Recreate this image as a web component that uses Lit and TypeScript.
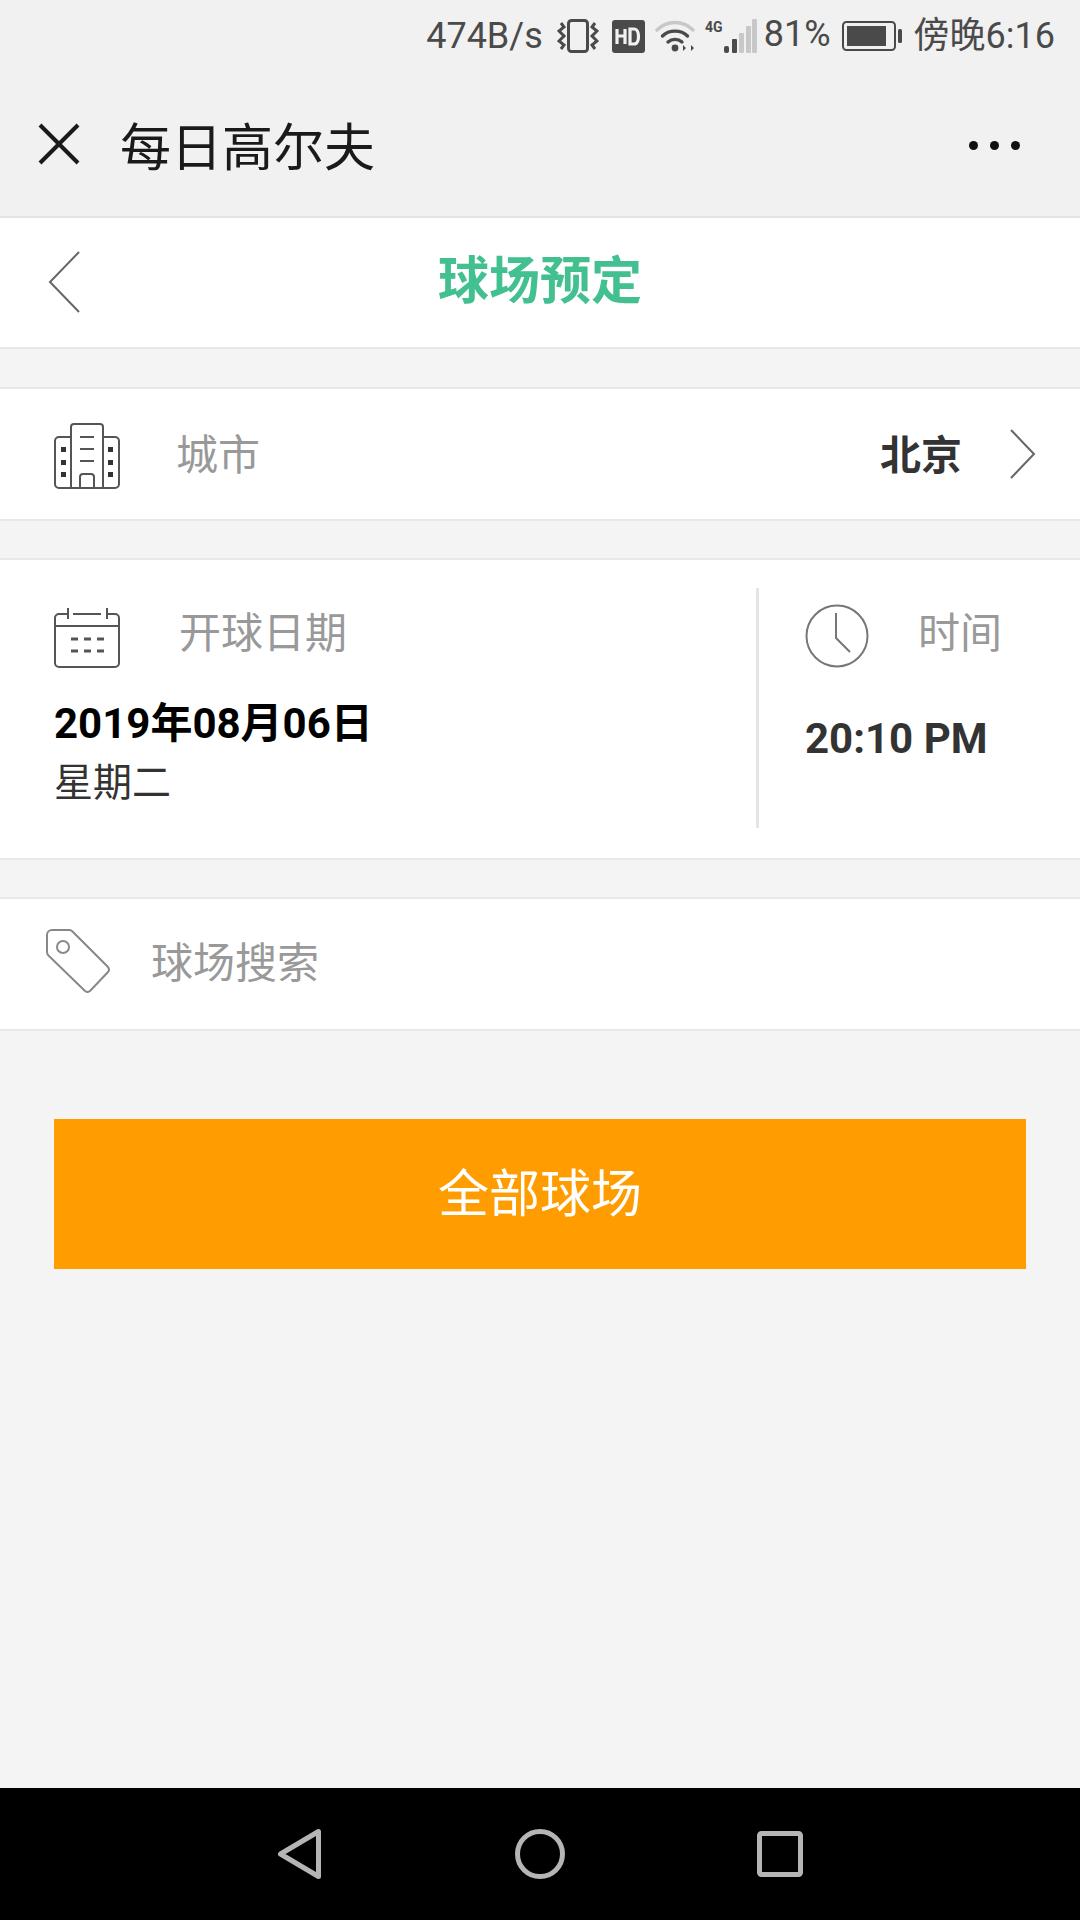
import { LitElement, html, css, svg } from "lit";
import { customElement } from "lit/decorators.js";

const closeIcon = svg`<line x1="2" y1="2" x2="40" y2="40"/><line x1="40" y1="2" x2="2" y2="40"/>`;

@customElement("app-root")
export class AppRoot extends LitElement {
  static styles = css`
    :host {
      display: flex;
      flex-direction: column;
      height: 1920px;
      width: 1080px;
      background: #f4f4f4;
      font-family: Roboto, "Noto Sans CJK SC", sans-serif;
      overflow: hidden;
    }
    svg { display: block; flex: none; }

    .status {
      height: 72px;
      background: #f1f1f1;
      display: flex;
      align-items: center;
      justify-content: flex-end;
      padding-right: 25px;
      color: #4a4a4a;
      font-size: 36px;
      line-height: 72px;
      white-space: nowrap;
    }
    .speed { margin-right: 14px; }
    .vib { margin-right: 13px; }
    .hd { margin-right: 10px; }
    .wifi { margin-right: 10px; }
    .signal { margin-right: 7px; }
    .percent { margin-right: 11px; margin-bottom: 4px; }
    .battery { margin-right: 12px; }

    .wx {
      height: 144px;
      background: #f1f1f1;
      border-bottom: 2px solid #e4e4e4;
      display: flex;
      align-items: center;
      padding: 0 60px 0 38px;
    }
    .wx-close { stroke: #1a1a1a; stroke-width: 4; margin-right: 40px; }
    .wx-title { font-size: 51px; color: #1a1a1a; flex: 1; font-family: "Noto Sans CJK SC", sans-serif; }
    .dots { display: flex; gap: 12px; margin-top: 2px; }
    .dots i { width: 9px; height: 9px; border-radius: 50%; background: #111; }

    .page-head {
      height: 129px;
      background: #fff;
      border-bottom: 2px solid #e6e6e6;
      position: relative;
      display: flex;
      align-items: center;
      justify-content: center;
    }
    .page-head svg { position: absolute; left: 48px; top: 33px; }
    .page-title {
      font-size: 51px;
      font-weight: 700;
      color: #42c08f;
      margin-bottom: 12px;
      font-family: "Noto Sans CJK SC", sans-serif;
    }

    .row {
      background: #fff;
      border-top: 2px solid #e8e8e8;
      border-bottom: 2px solid #e8e8e8;
      margin-top: 37px;
      display: flex;
      align-items: center;
    }
    .label {
      font-size: 42px;
      line-height: 40px;
      color: #999;
      font-family: "Noto Sans CJK SC", sans-serif;
    }

    .city { height: 130px; padding: 0 44px 0 54px; margin-top: 38px; }
    .city-icon { margin-top: 4px; }
    .city .label { margin-left: 56px; margin-bottom: 4px; flex: 1; }
    .city-value {
      font-size: 41px;
      line-height: 40px;
      font-weight: 700;
      color: #333;
      margin-right: 48px;
      margin-bottom: 4px;
      font-family: "Noto Sans CJK SC", sans-serif;
    }

    .when { height: 298px; align-items: flex-start; }
    .when-date { width: 702px; padding: 48px 0 0 54px; }
    .when-head { display: flex; align-items: center; }
    .when-date .label { margin-left: 59px; margin-bottom: 17px; }
    .date { font-size: 42px; font-weight: 700; color: #000; margin-top: 30px; line-height: 52px; }
    .weekday { font-size: 39px; color: #333; line-height: 50px; margin-top: 4px; font-family: "Noto Sans CJK SC", sans-serif; }
    .divider { width: 3px; height: 240px; margin-top: 28px; background: #e5e5e5; }
    .when-time { padding: 44px 0 0 46px; }
    .when-time .label { margin-left: 49px; margin-bottom: 13px; }
    .time { font-size: 42px; font-weight: 700; color: #333; margin-top: 45px; line-height: 52px; }

    .search { height: 130px; padding-left: 46px; }
    .search-icon { margin-bottom: 6px; }
    .search .label { margin-left: 41px; margin-bottom: 9px; }

    .all {
      margin: 88px 54px 0;
      height: 150px;
      background: #ff9c00;
      color: #fff;
      display: flex;
      align-items: center;
      justify-content: center;
    }
    .all span {
      font-size: 51px;
      margin-bottom: 8px;
      font-family: "Noto Sans CJK SC", sans-serif;
    }
    .spacer { flex: 1; }
    .nav {
      height: 132px;
      background: #000;
      display: flex;
      align-items: center;
      padding-left: 276px;
    }
    .nav svg { fill: none; stroke: #b5b5b5; stroke-width: 5; stroke-linejoin: round; }
    .nav .home { margin-left: 193px; }
    .nav .recent { margin-left: 192px; }
  `;

  render() {
    return html`
      <div class="status">
        <span class="speed">474B/s</span>
        <svg class="vib" width="42" height="34" viewBox="0 0 42 34" fill="none" stroke="#4a4a4a">
          <rect x="11.5" y="1.5" width="19" height="31" rx="3" stroke-width="3"/>
          <path d="M4 4 L7 8 L2 12 L7 17 L2 22 L7 26 L4 30 M38 4 L35 8 L40 12 L35 17 L40 22 L35 26 L38 30" stroke-width="3"/>
        </svg>
        <svg class="hd" width="33" height="33" viewBox="0 0 33 33">
          <rect width="33" height="33" rx="3" fill="#4a4a4a"/>
          <path d="M5 9v15M5 16h8M13 9v15M18 9v15h4c6 0 6-15 0-15z" fill="none" stroke="#f1f1f1" stroke-width="3.2"/>
        </svg>
        <svg class="wifi" width="40" height="34" viewBox="0 0 40 34" fill="none" stroke-linecap="round">
          <path d="M2 11 C12 1 28 1 38 11" stroke="#c8c8c8" stroke-width="3.4"/>
          <path d="M7.5 17 C14 10.5 26 10.5 32.5 17" stroke="#4a4a4a" stroke-width="3.4"/>
          <path d="M13 23 C17 19.5 23 19.5 27 23" stroke="#4a4a4a" stroke-width="3.4"/>
          <circle cx="20" cy="29" r="3.4" fill="#4a4a4a"/>
          <path d="M28 32v-6l3 3zM36 26v6l3-3z" fill="#4a4a4a" stroke="none"/>
        </svg>
        <svg class="signal" width="52" height="34" viewBox="0 0 52 34">
          <text x="0" y="13" font-size="14" font-weight="700" fill="#4a4a4a" font-family="Roboto">4G</text>
          <rect x="19" y="27" width="5" height="7" rx="2" fill="#4a4a4a"/>
          <rect x="27" y="20" width="5" height="14" rx="1" fill="#4a4a4a"/>
          <rect x="34" y="14" width="5" height="20" rx="1" fill="#c8c8c8"/>
          <rect x="41" y="7" width="5" height="27" rx="1" fill="#c8c8c8"/>
          <rect x="47" y="0" width="5" height="34" rx="1" fill="#c8c8c8"/>
        </svg>
        <span class="percent">81%</span>
        <svg class="battery" width="60" height="30" viewBox="0 0 60 30">
          <rect x="1" y="1" width="52" height="28" rx="3.5" fill="none" stroke="#4a4a4a" stroke-width="2"/>
          <rect x="5" y="5" width="39" height="20" fill="#4a4a4a"/>
          <rect x="56" y="8" width="4" height="14" rx="1.5" fill="#4a4a4a"/>
        </svg>
        <span>傍晚6:16</span>
      </div>

      <div class="wx">
        <svg class="wx-close" width="42" height="42" viewBox="0 0 42 42">${closeIcon}</svg>
        <span class="wx-title">每日高尔夫</span>
        <div class="dots"><i></i><i></i><i></i></div>
      </div>

      <div class="page-head">
        <svg width="32" height="62" viewBox="0 0 32 62" fill="none" stroke="#666" stroke-width="2">
          <path d="M31 1 L2 31 L31 61"/>
        </svg>
        <span class="page-title">球场预定</span>
      </div>

      <div class="row city">
        <svg class="city-icon" width="66" height="66" viewBox="0 0 66 66" fill="none" stroke="#555" stroke-width="2">
          <path d="M17 65V4a3 3 0 0 1 3-3h26a3 3 0 0 1 3 3v61"/>
          <path d="M17 14H5a4 4 0 0 0-4 4v43a4 4 0 0 0 4 4h56a4 4 0 0 0 4-4V18a4 4 0 0 0-4-4H49"/>
          <path d="M26 14h14M26 26h14M26 38h14"/>
          <path d="M26 65V54a3 3 0 0 1 3-3h8a3 3 0 0 1 3 3v11"/>
          <g fill="#333" stroke="none">
            <rect x="7" y="24" width="5" height="5"/><rect x="7" y="37" width="5" height="5"/><rect x="7" y="49" width="5" height="5"/>
            <rect x="54" y="24" width="5" height="5"/><rect x="54" y="37" width="5" height="5"/><rect x="54" y="49" width="5" height="5"/>
          </g>
        </svg>
        <span class="label">城市</span>
        <span class="city-value">北京</span>
        <svg width="26" height="50" viewBox="0 0 26 50" fill="none" stroke="#666" stroke-width="2">
          <path d="M1 1 L24 25 L1 49"/>
        </svg>
      </div>

      <div class="row when">
        <div class="when-date">
          <div class="when-head">
            <svg width="66" height="60" viewBox="0 0 66 60" fill="none" stroke="#555" stroke-width="2">
              <path d="M13 6H5a4 4 0 0 0-4 4v45a4 4 0 0 0 4 4h56a4 4 0 0 0 4-4V10a4 4 0 0 0-4-4h-8M19 6h28"/>
              <path d="M14 0v11M53 0v11M1 18h64"/>
              <path d="M17 31h7M30 31h7M43 31h7M17 43h7M30 43h7M43 43h7" stroke-width="3"/>
            </svg>
            <span class="label">开球日期</span>
          </div>
          <div class="date">2019年08月06日</div>
          <div class="weekday">星期二</div>
        </div>
        <div class="divider"></div>
        <div class="when-time">
          <div class="when-head">
            <svg width="64" height="64" viewBox="0 0 64 64" fill="none" stroke="#777" stroke-width="2">
              <circle cx="32" cy="32" r="30.5"/>
              <path d="M31 9v25l14 14"/>
            </svg>
            <span class="label">时间</span>
          </div>
          <div class="time">20:10 PM</div>
        </div>
      </div>

      <div class="row search">
        <svg class="search-icon" width="64" height="64" viewBox="0 0 64 64" fill="none" stroke="#888" stroke-width="2">
          <path d="M1 6a5 5 0 0 1 5-5h17a4 4 0 0 1 3 1l36 36a4 4 0 0 1 0 5L44 62a4 4 0 0 1-5 0L3 27a5 5 0 0 1-2-4z"/>
          <circle cx="17" cy="18" r="6"/>
        </svg>
        <span class="label">球场搜索</span>
      </div>

      <div class="all"><span>全部球场</span></div>
      <div class="spacer"></div>

      <div class="nav">
        <svg width="46" height="52" viewBox="0 0 46 52"><path d="M4.5 26 L42.5 3.5 V48.5 Z"/></svg>
        <svg class="home" width="50" height="50" viewBox="0 0 50 50"><circle cx="25" cy="25" r="22.5"/></svg>
        <svg class="recent" width="46" height="46" viewBox="0 0 46 46"><rect x="2.5" y="2.5" width="41" height="41" rx="2"/></svg>
      </div>
    `;
  }
}
